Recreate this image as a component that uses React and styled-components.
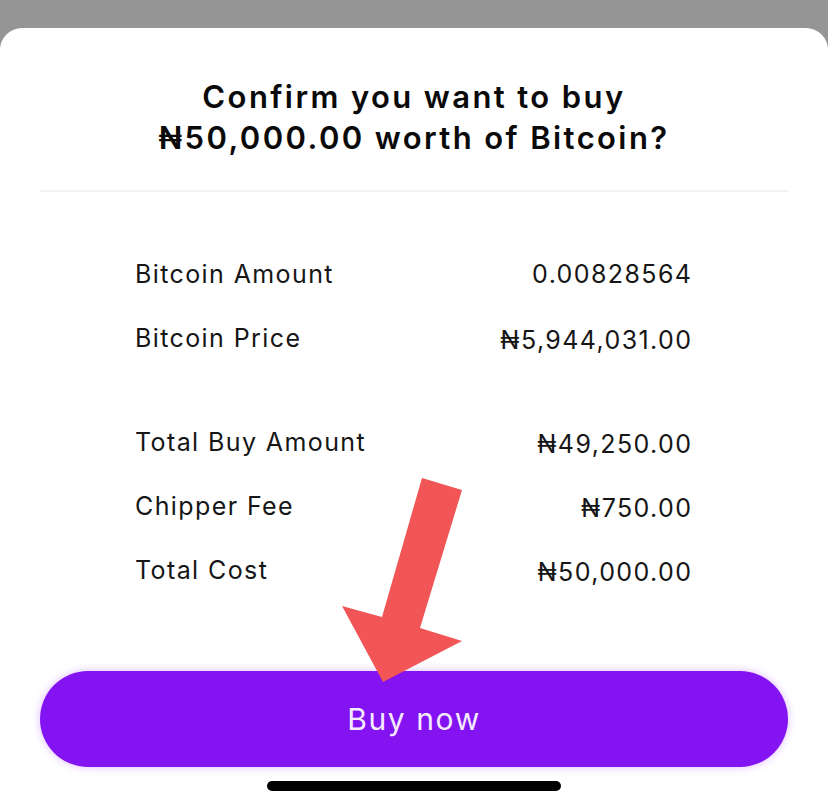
import React from 'react';
import styled, { createGlobalStyle } from 'styled-components';

const GlobalStyle = createGlobalStyle`
  body {
    margin: 0;
    background-color: #959595;
    font-family: Inter, "DejaVu Sans", sans-serif;
  }
`;

const Page = styled.div`
  position: relative;
  width: 828px;
  height: 809px;
  padding-top: 28px;
  box-sizing: border-box;
  overflow: hidden;
`;

const Sheet = styled.div`
  height: 781px;
  background-color: white;
  border-radius: 22px 22px 0 0;
  display: flex;
  flex-direction: column;
`;

const Title = styled.h2`
  margin: 0;
  padding-top: 48px;
  font-size: 31px;
  line-height: 41px;
  font-weight: 600;
  color: #0a0a0a;
  text-align: center;
  letter-spacing: 2.4px;
`;

const Divider = styled.div`
  margin: 32px 40px 0;
  height: 2px;
  background-color: #f2f2f2;
`;

const Details = styled.div`
  margin-top: 50px;
  padding: 0 137px 0 135px;
  display: flex;
  flex-direction: column;
  gap: 40px;
`;

const Group = styled.div`
  display: flex;
  flex-direction: column;
`;

const Row = styled.div`
  height: 64px;
  display: flex;
  align-items: center;
  justify-content: space-between;
  font-size: 25px;
  letter-spacing: 1.4px;
  color: #161616;
`;

const Value = styled.span`
  margin-right: -1.4px;
  padding-top: ${props => (props.shift ? '4px' : '0')};
`;

const BuyButton = styled.button`
  margin: 69px 40px 0;
  height: 96px;
  border: none;
  border-radius: 48px;
  background-color: #8413f2;
  color: #f6eaff;
  font-family: Inter, "DejaVu Sans", sans-serif;
  font-size: 30px;
  font-weight: 400;
  letter-spacing: 1.6px;
  box-shadow: 0 0 8px rgba(160, 60, 255, 0.35);
  cursor: pointer;
`;

const HomeIndicator = styled.div`
  margin: 14px auto 0;
  width: 294px;
  height: 10px;
  border-radius: 5px;
  background-color: #000;
`;

const ArrowOverlay = styled.svg`
  position: absolute;
  left: 0;
  top: 0;
  pointer-events: none;
`;

const groups = [
  [
    { label: 'Bitcoin Amount', value: '0.00828564' },
    { label: 'Bitcoin Price', value: '₦5,944,031.00', shift: true },
  ],
  [
    { label: 'Total Buy Amount', value: '₦49,250.00', shift: true },
    { label: 'Chipper Fee', value: '₦750.00', shift: true },
    { label: 'Total Cost', value: '₦50,000.00', shift: true },
  ],
];

const App = () => {
  return (
    <Page>
      <GlobalStyle />
      <Sheet>
        <Title>
          Confirm you want to buy
          <br />
          ₦50,000.00 worth of Bitcoin?
        </Title>
        <Divider />
        <Details>
          {groups.map((rows, gi) => (
            <Group key={gi}>
              {rows.map(row => (
                <Row key={row.label}>
                  <span>{row.label}</span>
                  <Value shift={row.shift}>{row.value}</Value>
                </Row>
              ))}
            </Group>
          ))}
        </Details>
        <BuyButton>Buy now</BuyButton>
        <HomeIndicator />
      </Sheet>
      <ArrowOverlay width="828" height="809" viewBox="0 0 828 809">
        <polygon
          points="422,478 462,490 420,628 462,641 383,682 342,606 382,617"
          fill="#f25555"
        />
      </ArrowOverlay>
    </Page>
  );
};

export default App;
